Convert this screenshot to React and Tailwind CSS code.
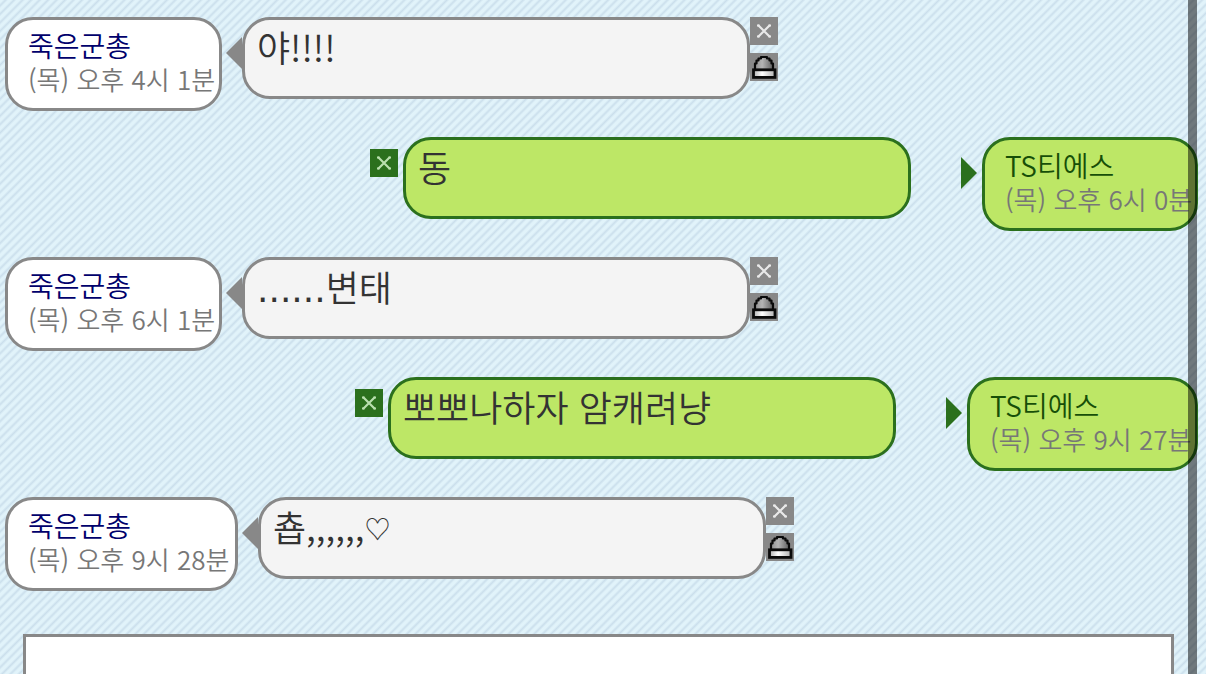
const messages = [
  { mine: false, name: '죽은군총', time: '(목) 오후 4시 1분', text: '야!!!!', wide: false },
  { mine: true, name: 'TS티에스', time: '(목) 오후 6시 0분', text: '동', wide: false },
  { mine: false, name: '죽은군총', time: '(목) 오후 6시 1분', lead: '......', text: '변태', wide: false },
  { mine: true, name: 'TS티에스', time: '(목) 오후 9시 27분', text: '뽀뽀나하자 암캐려냥', wide: true },
  { mine: false, name: '죽은군총', time: '(목) 오후 9시 28분', text: '춉,,,,,,', heart: '♡', wide: true },
];

function DeleteButton({ mine }) {
  return (
    <button
      type="button"
      aria-label="삭제"
      className={`flex size-7 shrink-0 items-center justify-center ${mine ? 'bg-[#2b701d] text-[#b9dfae]' : 'bg-[#888888] text-[#e9e9e9]'}`}
    >
      <svg viewBox="0 0 28 28" className="size-7" fill="none" stroke="currentColor" strokeWidth="2.2" aria-hidden="true">
        <path d="M8 8 20 20M20 8 8 20" />
        <path d="M7 8.500H9.500M18.500 8.500H21M7 19.500H9.500M18.500 19.500H21" />
      </svg>
    </button>
  );
}

function LockButton() {
  return (
    <button type="button" aria-label="비밀글" className="size-7 bg-[#888888]">
      <svg viewBox="0 0 28 28" className="size-7" aria-hidden="true">
        <defs>
          <linearGradient id="lockBody" x1="0" x2="1" y1="0" y2="0">
            <stop offset="0" stopColor="#b0b0b0" />
            <stop offset="0.4" stopColor="#ffffff" />
            <stop offset="1" stopColor="#b0b0b0" />
          </linearGradient>
          <linearGradient id="lockTop" x1="0" x2="1" y1="0" y2="0">
            <stop offset="0" stopColor="#909090" />
            <stop offset="0.4" stopColor="#b4b4b4" />
            <stop offset="1" stopColor="#606060" />
          </linearGradient>
        </defs>
        <path d="M5 17V10.500H6.500V7.500H8.500V5.500H11V4H17V5.500H19.500V7.500H21.500V10.500H23V17Z" fill="url(#lockTop)" stroke="#0a0a0a" strokeWidth="2.2" strokeLinejoin="round" />
        <rect x="3.500" y="16.800" width="21.500" height="7.600" fill="url(#lockBody)" stroke="#0a0a0a" strokeWidth="2.800" />
      </svg>
    </button>
  );
}

function Author({ m }) {
  const width = m.mine ? (m.wide ? 'w-[231px]' : 'w-[216px]') : m.wide ? 'w-[233px]' : 'w-[217px]';
  const tone = m.mine ? 'border-[#2b701d] bg-[#bde766]' : 'border-[#888888] bg-white';
  return (
    <div className={`h-[94px] shrink-0 overflow-hidden rounded-[28px] border-3 pt-2 pl-5 whitespace-nowrap ${width} ${tone}`}>
      <a href="#author" className={`block text-[28px] leading-[34px] ${m.mine ? 'text-[#174f08]' : 'text-[#00006c]'}`}>
        {m.name}
      </a>
      <time className="block text-[26px] leading-[34px] text-[#777777]">{m.time}</time>
    </div>
  );
}

function Bubble({ m }) {
  return (
    <p
      className={`h-[82px] w-[508px] shrink-0 rounded-[28px] border-3 px-3 pt-1 text-[36px] leading-[44px] text-[#333333] ${
        m.mine ? 'border-[#2b701d] bg-[#bde766]' : 'border-[#888888] bg-[#f4f4f4]'
      }`}
    >
      {m.lead && <span className="font-['DejaVu_Sans',sans-serif] font-normal">{m.lead}</span>}
      {m.text}
      {m.heart && <span className="align-[3px] text-[26px] leading-none">{m.heart}</span>}
    </p>
  );
}

function Arrow({ mine }) {
  return (
    <svg
      viewBox="0 0 16 32"
      className={`mt-5 h-8 w-4 shrink-0 ${mine ? 'fill-[#2b701d]' : 'fill-[#888888]'}`}
      aria-hidden="true"
    >
      <path d={mine ? 'M0 0 16 16 0 32Z' : 'M16 0 0 16 16 32Z'} />
    </svg>
  );
}

function Message({ m }) {
  if (m.mine) {
    return (
      <li className="flex h-[120px] items-start justify-end pr-2">
        <div className="mt-3 mr-[5px] flex">
          <DeleteButton mine />
        </div>
        <Bubble m={m} />
        <div className="ml-[50px] mr-[5px] flex">
          <Arrow mine />
        </div>
        <Author m={m} />
      </li>
    );
  }
  return (
    <li className="flex h-[120px] items-start pl-[5px]">
      <Author m={m} />
      <div className="ml-1 flex">
        <Arrow />
      </div>
      <Bubble m={m} />
      <div className="flex flex-col gap-2">
        <DeleteButton />
        <LockButton />
      </div>
    </li>
  );
}

export default function App() {
  return (
    <main
      lang="ko"
      className="relative h-screen overflow-hidden bg-[#e1f2f9] bg-[repeating-linear-gradient(135deg,#e1f3fa_0px,#e1f3fa_2px,#cbdfec_4px,#e1f3fa_6px)] pt-[17px] font-['Noto_Sans_CJK_KR',sans-serif] font-[350]"
    >
      <ul>
        {messages.map((m) => (
          <Message key={m.time} m={m} />
        ))}
      </ul>
      <textarea
        aria-label="메시지"
        className="ml-[23px] mt-[17px] block h-24 w-[calc(100%-55px)] resize-none border-3 border-[#888888] bg-white p-3 text-[36px] outline-none"
      />
      <div className="absolute inset-y-0 right-[9px] w-[9px] bg-black/50" />
    </main>
  );
}
